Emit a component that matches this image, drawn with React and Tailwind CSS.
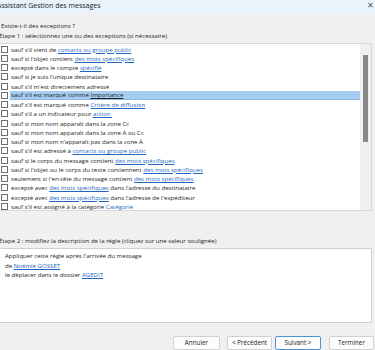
import React from "react";

const L = ({ children }) => (
  <span className="text-[#1f66c1] underline decoration-[0.5px] underline-offset-[1px]">{children}</span>
);

const rows = [
  ["sauf s'il vient de ", <L key="a">contacts ou groupe public</L>],
  ["sauf si l'objet contient ", <L key="a">des mots spécifiques</L>],
  ["excepté dans le compte ", <L key="a">spécifié</L>],
  ["sauf si je suis l'unique destinataire"],
  ["sauf s'il m'est directement adressé"],
  ["sauf s'il est marqué comme ", <span key="a" className="underline decoration-[0.5px] underline-offset-[1px]">Importance</span>],
  ["sauf s'il est marqué comme ", <L key="a">Critère de diffusion</L>],
  ["sauf s'il a un indicateur pour ", <L key="a">action&nbsp;</L>],
  ["sauf si mon nom apparaît dans la zone Cc"],
  ["sauf si mon nom apparaît dans la zone À ou Cc"],
  ["sauf si mon nom n'apparaît pas dans la zone À"],
  ["sauf s'il est adressé à ", <L key="a">contacts ou groupe public</L>],
  ["sauf si le corps du message contient ", <L key="a">des mots spécifiques</L>],
  ["sauf si l'objet ou le corps du texte contiennent ", <L key="a">des mots spécifiques</L>],
  ["seulement si l'en-tête du message contient ", <L key="a">des mots spécifiques</L>],
  ["excepté avec ", <L key="a">des mots spécifiques</L>, " dans l'adresse du destinataire"],
  ["excepté avec ", <L key="a">des mots spécifiques</L>, " dans l'adresse de l'expéditeur"],
  ["sauf s'il est assigné à la catégorie ", <L key="a">Catégorie</L>],
];

const btn =
  "h-[14px] bg-[#fdfdfd] border rounded-[2px] leading-none text-[6.3px] text-[#1e1e1e] flex items-center justify-center shrink-0";

export default function App() {
  return (
    <div className="w-[375px] h-[350px] overflow-hidden bg-[#f0f0f0] text-[#1e1e1e] flex flex-col font-['Open_Sans','Noto_Sans',sans-serif]">
      {/* title bar */}
      <div className="h-[14px] bg-[#eaf3fb] flex items-start justify-between shrink-0">
        <span className="text-[7px] leading-[10px] mt-[1px] ml-[-3px] whitespace-nowrap text-[#222]">
          Assistant Gestion des messages
        </span>
        <span className="text-[8px] leading-[8px] mt-[1px] mr-[1px] text-[#555]">✕</span>
      </div>

      <div className="mt-[7px] h-[10px] leading-[10px] text-[6.1px] whitespace-nowrap ml-[1px]">
        Existe-t-il des exceptions ?
      </div>
      <div className="h-[10px] leading-[10px] text-[6.1px] whitespace-nowrap ml-[-1px]">
        Étape 1 : sélectionnez une ou des exceptions (si nécessaire)
      </div>

      {/* list box */}
      <div className="mt-[2px] h-[168px] ml-[-2px] w-[374px] border border-[#d6d6d6] bg-white flex shrink-0 overflow-hidden">
        <div className="flex-1 flex flex-col pt-[0.5px]">
          {rows.map((r, i) => {
            const sel = i === 5;
            return (
              <div key={i} className="h-[9.26px] flex items-center shrink-0">
                <div className="w-[7px] h-[7px] border border-[#6e6e6e] bg-white ml-[2px] shrink-0" />
                <div
                  className={
                    "ml-[2px] flex-1 h-full flex items-center pl-[1px] text-[6.1px] whitespace-pre " +
                    (sel ? "bg-[#a6cdf1] border-b border-[#90b9e2]" : "")
                  }
                >
                  <span>{r}</span>
                </div>
              </div>
            );
          })}
        </div>
        <div className="w-[11px] bg-[#f0f0f0] shrink-0 pt-[11px] pl-[3px]">
          <div className="w-[5px] h-[87px] bg-[#898989]" />
        </div>
      </div>

      <div className="mt-[25px] h-[10px] leading-[10px] text-[6.1px] whitespace-nowrap ml-[-1px]">
        Étape 2 : modifiez la description de la règle (cliquez sur une valeur soulignée)
      </div>

      {/* description */}
      <div className="mt-[2px] h-[75px] ml-[-2px] w-[374px] border border-[#cfcfcf] bg-white pt-[2px] pl-[6px] text-[6.1px] leading-[9.6px] shrink-0">
        <div>Appliquer cette règle après l'arrivée du message</div>
        <div>
          de <L>Noémie GOSSET</L>
        </div>
        <div>
          le déplacer dans le dossier <L>AGEDIT</L>
        </div>
      </div>

      {/* buttons */}
      <div className="mt-[13px] flex pl-[173px] shrink-0">
        <button className={btn + " w-[47px] mr-[7px] border-[#d0d0d0]"}>Annuler</button>
        <button className={btn + " w-[45px] mr-[3px] border-[#d0d0d0]"}>&lt; Précédent</button>
        <button className={btn + " w-[46px] mr-[8px] border-[#4b91d8]"}>Suivant &gt;</button>
        <button className={btn + " w-[45px] border-[#d0d0d0]"}>Terminer</button>
      </div>
    </div>
  );
}
